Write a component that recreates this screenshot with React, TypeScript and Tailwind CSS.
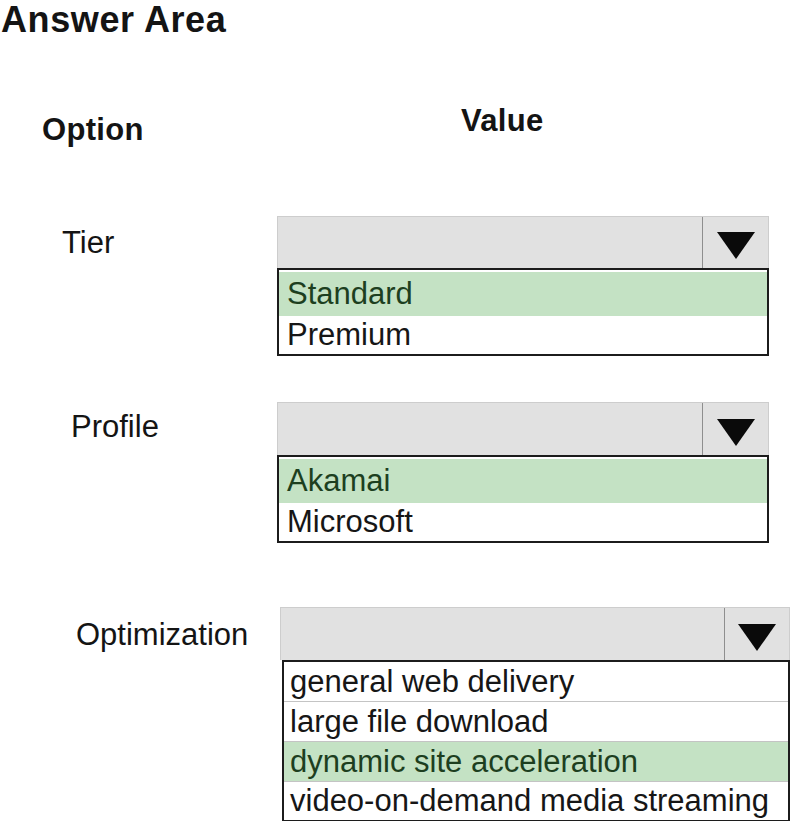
type Row = { text: string; h: number; selected?: boolean; line?: boolean }

interface DropdownProps {
  width: number
  arrowWidth: number
  headerHeight: number
  listInset: number
  textPad: number
  padTop: number
  rows: Row[]
}

function Arrow() {
  return (
    <svg width="38" height="27" viewBox="0 0 38 27">
      <polygon points="0,0 38,0 19,27" fill="#0a0a0a" />
    </svg>
  )
}

function Dropdown({ width, arrowWidth, headerHeight, listInset, textPad, padTop, rows }: DropdownProps) {
  return (
    <div style={{ width }} className="flex flex-col">
      <div
        style={{ height: headerHeight }}
        className="flex bg-[#e1e1e1] border border-[#cdcdcd] border-b-0"
      >
        <div className="flex-1" />
        <div
          style={{ width: arrowWidth }}
          className="flex items-center justify-center border-l border-[#8e8e8e] pt-[6px]"
        >
          <Arrow />
        </div>
      </div>
      <div style={{ marginLeft: listInset, paddingTop: padTop }} className="border-2 border-[#1c1c1c] bg-white">
        {rows.map((r, i) => (
          <div
            key={r.text}
            style={{ height: r.h, lineHeight: `${r.h}px`, paddingLeft: textPad }}
            className={`whitespace-nowrap ${r.selected ? 'bg-[#c4e2c4] text-[#1d3f1f]' : 'text-[#161616]'} ${
              r.line && i < rows.length - 1 ? 'border-b border-[#c4c4c4]' : ''
            }`}
          >
            {r.text}
          </div>
        ))}
      </div>
    </div>
  )
}

export default function App() {
  return (
    <div
      className="w-[792px] h-[821px] overflow-hidden bg-white text-[#141414]"
      style={{ fontFamily: '"Liberation Sans", Arial, sans-serif' }}
    >
      <h1 className="text-[36px] leading-[40px] font-bold pl-[1px] tracking-[0.6px]">Answer Area</h1>

      <div className="flex items-start mt-[65px] text-[31px] leading-[31px] font-bold tracking-[0.3px]">
        <div className="w-[461px] pl-[42px] mt-[9px]">Option</div>
        <div>Value</div>
      </div>

      <div className="text-[31px]">
        <div className="flex mt-[71px]">
          <div className="w-[277px] pl-[62px] pt-[11px] leading-[31px]">Tier</div>
          <Dropdown
            width={492}
            arrowWidth={66}
            headerHeight={52}
            listInset={0}
            textPad={8}
            padTop={2}
            rows={[
              { text: 'Standard', h: 44, selected: true },
              { text: 'Premium', h: 38 },
            ]}
          />
        </div>

        <div className="flex mt-[46px]">
          <div className="w-[277px] pl-[71px] pt-[9px] leading-[31px]">Profile</div>
          <Dropdown
            width={492}
            arrowWidth={66}
            headerHeight={53}
            listInset={0}
            textPad={8}
            padTop={2}
            rows={[
              { text: 'Akamai', h: 44, selected: true },
              { text: 'Microsoft', h: 38 },
            ]}
          />
        </div>

        <div className="flex mt-[64px]">
          <div className="w-[280px] pl-[76px] pt-[12px] leading-[31px]">Optimization</div>
          <Dropdown
            width={510}
            arrowWidth={65}
            headerHeight={53}
            listInset={2}
            textPad={6}
            padTop={0}
            rows={[
              { text: 'general web delivery', h: 40, line: true },
              { text: 'large file download', h: 40, line: true },
              { text: 'dynamic site acceleration', h: 40, selected: true, line: true },
              { text: 'video-on-demand media streaming', h: 38, line: true },
            ]}
          />
        </div>
      </div>
    </div>
  )
}
